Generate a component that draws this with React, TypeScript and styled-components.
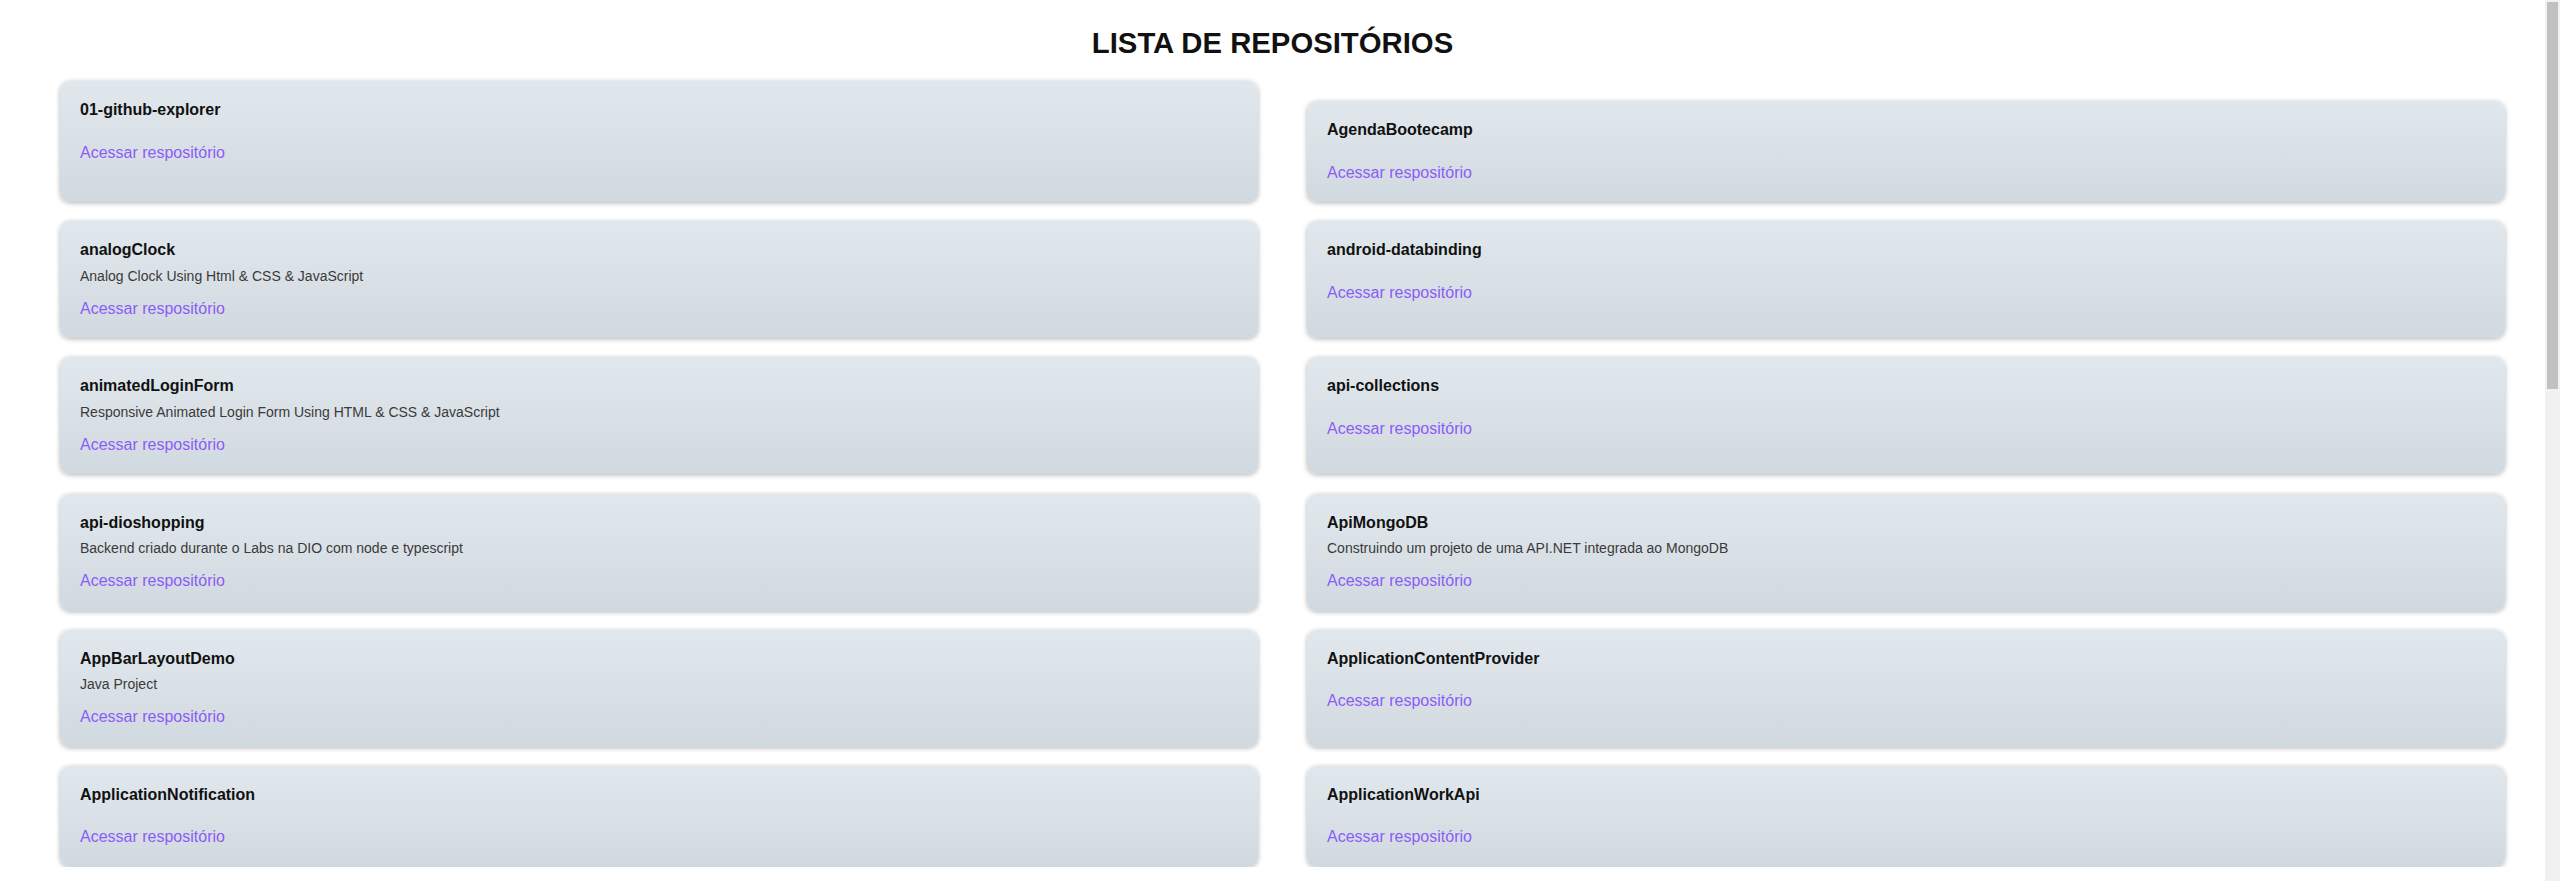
import React from "react";
import styled, { createGlobalStyle } from "styled-components";

const GlobalStyle = createGlobalStyle`
    body {
        margin: 0;
        background-color: #ffffff;
        font-family: "Liberation Sans", Arial, sans-serif;
    }
`;

const PageWrapper = styled.main`
    padding: 26px 15px 0 0;
`;

const Title = styled.h1`
    margin: 0;
    text-align: center;
    font-size: 29.3px;
    line-height: 34px;
    font-weight: bold;
    color: #111111;
`;

const RepoGrid = styled.section`
    display: grid;
    grid-template-columns: 1fr 1fr;
    column-gap: 49px;
    row-gap: 19.2px;
    margin-top: 21px;
    padding: 0 40px 0 60px;
`;

const Card = styled.article`
    display: flex;
    flex-direction: column;
    padding: 20px;
    border-radius: 10px;
    background: linear-gradient(180deg, #e1e8ed 0%, #d1d9e0 100%);
    box-shadow: 0 1px 5px rgba(0, 0, 0, 0.3);

    &:nth-child(2) {
        margin-top: 20px;
    }
`;

const RepoName = styled.h3`
    margin: 0;
    font-size: 16px;
    line-height: 18.5px;
    font-weight: bold;
    color: #111111;
`;

const Description = styled.p`
    margin: 8px 0 0;
    font-size: 14px;
    line-height: 16px;
    color: #3a3a3a;
`;

const RepoLink = styled.a`
    display: block;
    margin-top: 16px;
    font-size: 16px;
    line-height: 18.5px;
    color: #8b5cf6;
    text-decoration: none;
`;

const ScrollTrack = styled.div`
    position: fixed;
    top: 0;
    right: 0;
    bottom: 0;
    width: 15px;
    background-color: #f1f1f1;
`;

const ScrollThumb = styled.div`
    margin: 2px;
    height: 387px;
    background-color: #c1c1c1;
`;

type Repo = {
    name: string;
    description?: string;
};

const repos: Repo[] = [
    { name: "01-github-explorer" },
    { name: "AgendaBootecamp" },
    { name: "analogClock", description: "Analog Clock Using Html & CSS & JavaScript" },
    { name: "android-databinding" },
    { name: "animatedLoginForm", description: "Responsive Animated Login Form Using HTML & CSS & JavaScript" },
    { name: "api-collections" },
    { name: "api-dioshopping", description: "Backend criado durante o Labs na DIO com node e typescript" },
    { name: "ApiMongoDB", description: "Construindo um projeto de uma API.NET integrada ao MongoDB" },
    { name: "AppBarLayoutDemo", description: "Java Project" },
    { name: "ApplicationContentProvider" },
    { name: "ApplicationNotification" },
    { name: "ApplicationWorkApi" },
];

export default function App() {
    return (
        <>
            <GlobalStyle />
            <PageWrapper>
                <Title>LISTA DE REPOSITÓRIOS</Title>

                <RepoGrid>
                    {repos.map((repo) => (
                        <Card key={repo.name}>
                            <RepoName>{repo.name}</RepoName>
                            <Description>{repo.description}</Description>
                            <RepoLink href="#">Acessar respositório</RepoLink>
                        </Card>
                    ))}
                </RepoGrid>
            </PageWrapper>

            <ScrollTrack>
                <ScrollThumb />
            </ScrollTrack>
        </>
    );
}
